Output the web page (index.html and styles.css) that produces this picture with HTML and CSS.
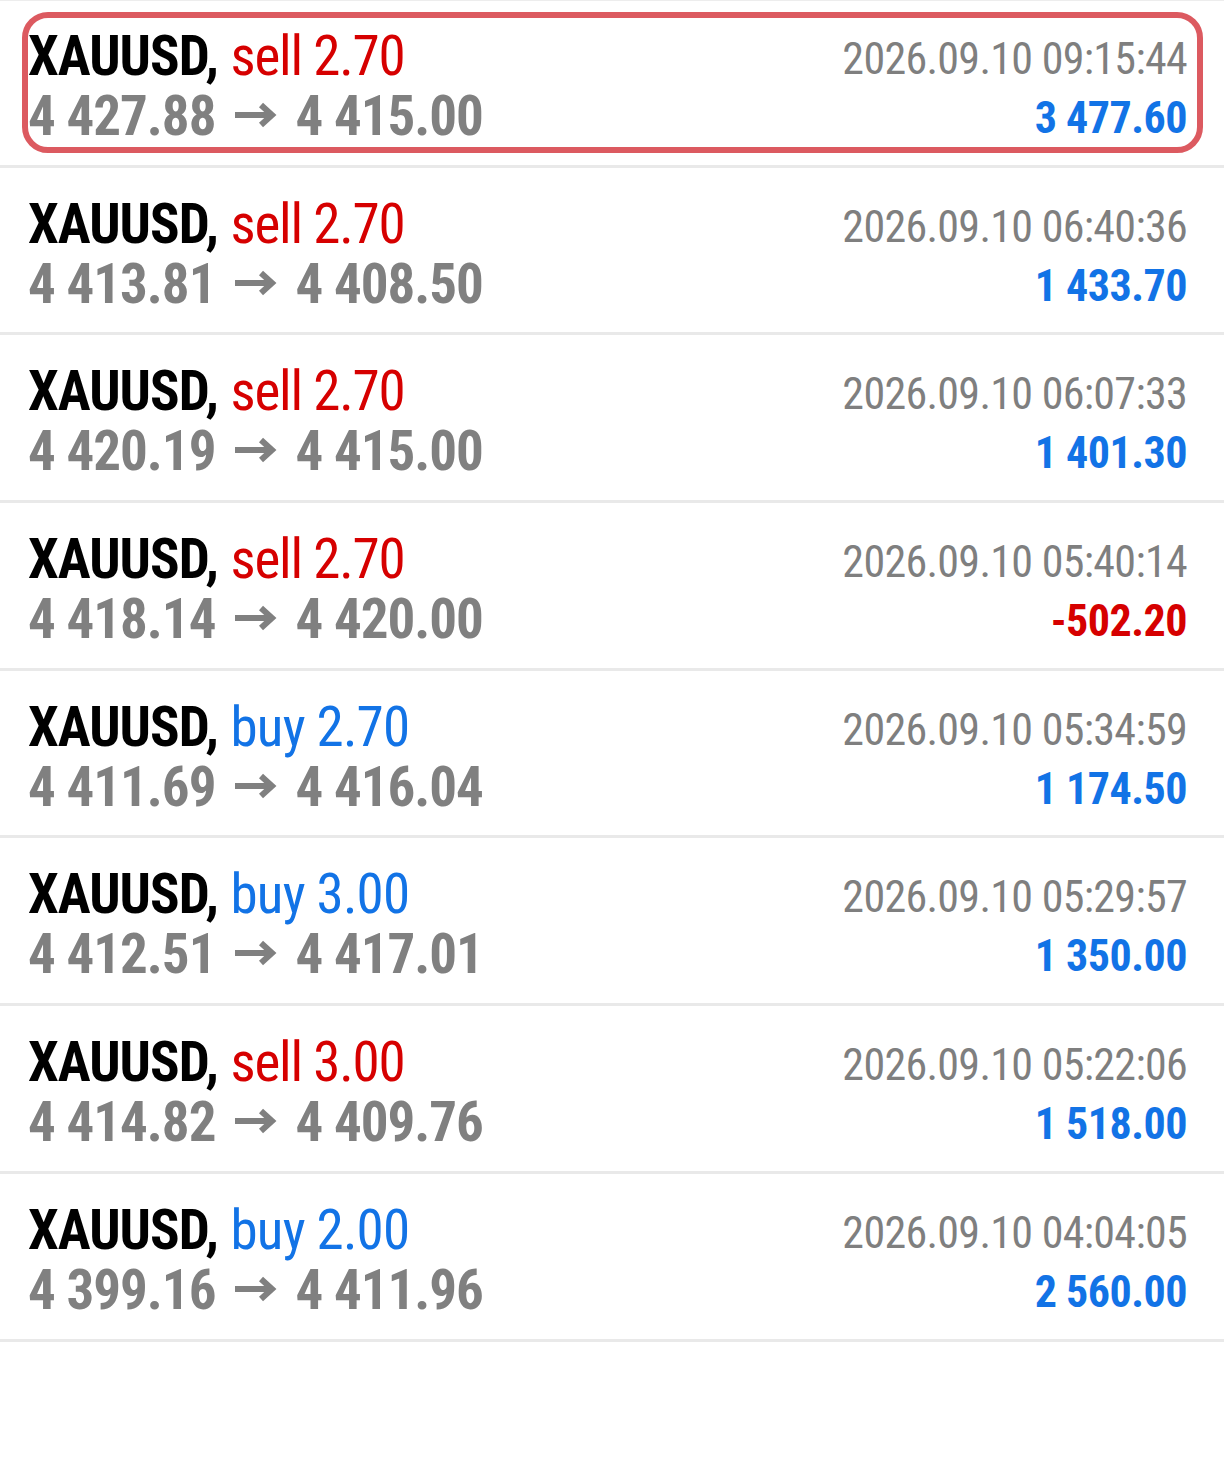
FILE: index.html
```html
<!DOCTYPE html>
<html lang="en">
<head>
<meta charset="utf-8">
<title>History</title>
<link rel="stylesheet" href="styles.css">
</head>
<body>
<div class="list">
  <div class="row">
    <div class="left">
      <div class="title"><span class="sym">XAUUSD,</span> <span class="sell">sell 2.70</span></div>
      <div class="prices">4 427.88<svg class="arrow" viewBox="0 0 42 26" width="42" height="26"><rect x="0" y="10" width="37" height="6"/><polyline points="26,3 37,13 26,23"/></svg>4 415.00</div>
    </div>
    <div class="right">
      <div class="date">2026.09.10 09:15:44</div>
      <div class="profit pos">3 477.60</div>
    </div>
    <div class="highlight"></div>
  </div>
  <div class="row">
    <div class="left">
      <div class="title"><span class="sym">XAUUSD,</span> <span class="sell">sell 2.70</span></div>
      <div class="prices">4 413.81<svg class="arrow" viewBox="0 0 42 26" width="42" height="26"><rect x="0" y="10" width="37" height="6"/><polyline points="26,3 37,13 26,23"/></svg>4 408.50</div>
    </div>
    <div class="right">
      <div class="date">2026.09.10 06:40:36</div>
      <div class="profit pos">1 433.70</div>
    </div>
  </div>
  <div class="row">
    <div class="left">
      <div class="title"><span class="sym">XAUUSD,</span> <span class="sell">sell 2.70</span></div>
      <div class="prices">4 420.19<svg class="arrow" viewBox="0 0 42 26" width="42" height="26"><rect x="0" y="10" width="37" height="6"/><polyline points="26,3 37,13 26,23"/></svg>4 415.00</div>
    </div>
    <div class="right">
      <div class="date">2026.09.10 06:07:33</div>
      <div class="profit pos">1 401.30</div>
    </div>
  </div>
  <div class="row">
    <div class="left">
      <div class="title"><span class="sym">XAUUSD,</span> <span class="sell">sell 2.70</span></div>
      <div class="prices">4 418.14<svg class="arrow" viewBox="0 0 42 26" width="42" height="26"><rect x="0" y="10" width="37" height="6"/><polyline points="26,3 37,13 26,23"/></svg>4 420.00</div>
    </div>
    <div class="right">
      <div class="date">2026.09.10 05:40:14</div>
      <div class="profit neg">-502.20</div>
    </div>
  </div>
  <div class="row">
    <div class="left">
      <div class="title"><span class="sym">XAUUSD,</span> <span class="buy">buy 2.70</span></div>
      <div class="prices">4 411.69<svg class="arrow" viewBox="0 0 42 26" width="42" height="26"><rect x="0" y="10" width="37" height="6"/><polyline points="26,3 37,13 26,23"/></svg>4 416.04</div>
    </div>
    <div class="right">
      <div class="date">2026.09.10 05:34:59</div>
      <div class="profit pos">1 174.50</div>
    </div>
  </div>
  <div class="row">
    <div class="left">
      <div class="title"><span class="sym">XAUUSD,</span> <span class="buy">buy 3.00</span></div>
      <div class="prices">4 412.51<svg class="arrow" viewBox="0 0 42 26" width="42" height="26"><rect x="0" y="10" width="37" height="6"/><polyline points="26,3 37,13 26,23"/></svg>4 417.01</div>
    </div>
    <div class="right">
      <div class="date">2026.09.10 05:29:57</div>
      <div class="profit pos">1 350.00</div>
    </div>
  </div>
  <div class="row">
    <div class="left">
      <div class="title"><span class="sym">XAUUSD,</span> <span class="sell">sell 3.00</span></div>
      <div class="prices">4 414.82<svg class="arrow" viewBox="0 0 42 26" width="42" height="26"><rect x="0" y="10" width="37" height="6"/><polyline points="26,3 37,13 26,23"/></svg>4 409.76</div>
    </div>
    <div class="right">
      <div class="date">2026.09.10 05:22:06</div>
      <div class="profit pos">1 518.00</div>
    </div>
  </div>
  <div class="row">
    <div class="left">
      <div class="title"><span class="sym">XAUUSD,</span> <span class="buy">buy 2.00</span></div>
      <div class="prices">4 399.16<svg class="arrow" viewBox="0 0 42 26" width="42" height="26"><rect x="0" y="10" width="37" height="6"/><polyline points="26,3 37,13 26,23"/></svg>4 411.96</div>
    </div>
    <div class="right">
      <div class="date">2026.09.10 04:04:05</div>
      <div class="profit pos">2 560.00</div>
    </div>
  </div>
</div>
</body>
</html>
```

FILE: styles.css
```css
html, body {
  margin: 0;
  padding: 0;
  background: #ffffff;
}
body {
  font-family: "Roboto Condensed", "Roboto", "Liberation Sans Narrow", sans-serif;
  font-stretch: 75%;
  width: 1224px;
  height: 1480px;
  box-shadow: inset 0 1px 0 #ededed;
}
.list {
  display: flex;
  flex-direction: column;
}
.row {
  position: relative;
  display: flex;
  justify-content: space-between;
  align-items: flex-start;
  height: 164.7px;
  border-bottom: 3px solid #e9e9e9;
  padding: 0 37px 0 28px;
}
.left {
  padding-top: 26px;
}
.right {
  padding-top: 30px;
  text-align: right;
}
.title {
  font-size: 55px;
  line-height: 60px;
  white-space: nowrap;
}
.sym {
  font-weight: 700;
  color: #000000;
  letter-spacing: -1px;
}
.sell {
  color: #d60000;
  letter-spacing: -1.2px;
}
.buy {
  color: #1273e6;
  letter-spacing: -0.8px;
}
.prices {
  font-size: 55px;
  line-height: 60px;
  font-weight: 700;
  color: #808080;
  letter-spacing: -1px;
  white-space: nowrap;
}
.arrow {
  vertical-align: 7px;
  margin: 0 18px 0 20px;
  fill: #808080;
}
.arrow polyline {
  fill: none;
  stroke: #808080;
  stroke-width: 6;
  stroke-linejoin: miter;
}
.date {
  font-size: 44px;
  line-height: 58px;
  color: #7f7f7f;
  letter-spacing: -0.7px;
  white-space: nowrap;
}
.profit {
  font-size: 44px;
  line-height: 60px;
  font-weight: 700;
  letter-spacing: -0.5px;
  white-space: nowrap;
}
.pos {
  color: #1273e6;
}
.neg {
  color: #d60000;
}
.highlight {
  position: absolute;
  left: 22px;
  right: 21px;
  top: 12px;
  height: 129px;
  border: 6px solid #dc5a60;
  border-radius: 26px;
  pointer-events: none;
}
```
